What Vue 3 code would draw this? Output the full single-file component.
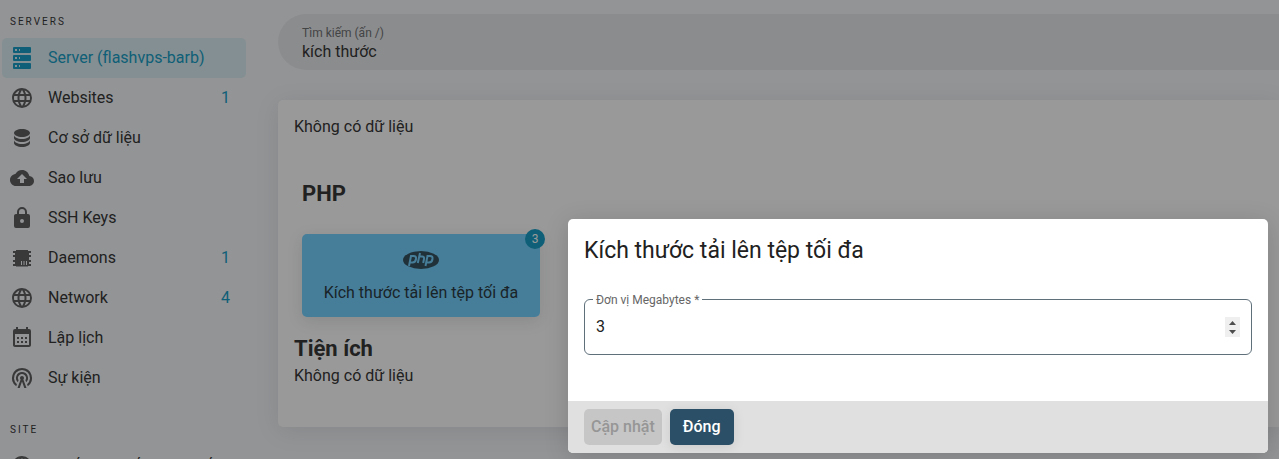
<script setup>
import { ref } from 'vue'

const globe = 'M16.36,14C16.44,13.34 16.5,12.68 16.5,12C16.5,11.32 16.44,10.66 16.36,10H19.74C19.9,10.64 20,11.31 20,12C20,12.69 19.9,13.36 19.74,14M14.59,19.56C15.19,18.45 15.65,17.25 15.97,16H18.92C17.96,17.65 16.43,18.93 14.59,19.56M14.34,14H9.66C9.56,13.34 9.5,12.68 9.5,12C9.5,11.32 9.56,10.65 9.66,10H14.34C14.43,10.65 14.5,11.32 14.5,12C14.5,12.68 14.43,13.34 14.34,14M12,19.96C11.17,18.76 10.5,17.43 10.09,16H13.91C13.5,17.43 12.83,18.76 12,19.96M8,8H5.08C6.03,6.34 7.57,5.06 9.4,4.44C8.8,5.55 8.35,6.75 8,8M5.08,16H8C8.35,17.25 8.8,18.45 9.4,19.56C7.57,18.93 6.03,17.65 5.08,16M4.26,14C4.1,13.36 4,12.69 4,12C4,11.31 4.1,10.64 4.26,10H7.64C7.56,10.66 7.5,11.32 7.5,12C7.5,12.68 7.56,13.34 7.64,14M12,4.03C12.83,5.23 13.5,6.57 13.91,8H10.09C10.5,6.57 11.17,5.23 12,4.03M18.92,8H15.97C15.65,6.75 15.19,5.55 14.59,4.44C16.43,5.07 17.96,6.34 18.92,8M12,2C6.47,2 2,6.5 2,12A10,10 0 0,0 12,22A10,10 0 0,0 22,12A10,10 0 0,0 12,2Z'

const servers = [
  { label: 'Server (flashvps-barb)', active: true, icon: 'M4,1H20A1,1 0 0,1 21,2V6A1,1 0 0,1 20,7H4A1,1 0 0,1 3,6V2A1,1 0 0,1 4,1M4,9H20A1,1 0 0,1 21,10V14A1,1 0 0,1 20,15H4A1,1 0 0,1 3,14V10A1,1 0 0,1 4,9M4,17H20A1,1 0 0,1 21,18V22A1,1 0 0,1 20,23H4A1,1 0 0,1 3,22V18A1,1 0 0,1 4,17M9,5H10V3H9V5M9,13H10V11H9V13M9,21H10V19H9V21M5,3V5H7V3H5M5,11V13H7V11H5M5,19V21H7V19H5Z' },
  { label: 'Websites', count: 1, icon: globe },
  { label: 'Cơ sở dữ liệu', icon: 'M12,3C7.58,3 4,4.79 4,7C4,9.21 7.58,11 12,11C16.42,11 20,9.21 20,7C20,4.79 16.42,3 12,3M4,9V12C4,14.21 7.58,16 12,16C16.42,16 20,14.21 20,12V9C20,11.21 16.42,13 12,13C7.58,13 4,11.21 4,9M4,14V17C4,19.21 7.58,21 12,21C16.42,21 20,19.21 20,17V14C20,16.21 16.42,18 12,18C7.58,18 4,16.21 4,14Z' },
  { label: 'Sao lưu', icon: 'M19.35 10.04C18.67 6.59 15.64 4 12 4 9.11 4 6.6 5.64 5.35 8.04 2.34 8.36 0 10.91 0 14c0 3.31 2.69 6 6 6h13c2.76 0 5-2.24 5-5 0-2.64-2.05-4.78-4.65-4.96zM14 13v4h-4v-4H7l5-5 5 5h-3z' },
  { label: 'SSH Keys', icon: 'M12,17A2,2 0 0,0 14,15C14,13.89 13.1,13 12,13A2,2 0 0,0 10,15A2,2 0 0,0 12,17M18,8A2,2 0 0,1 20,10V20A2,2 0 0,1 18,22H6A2,2 0 0,1 4,20V10C4,8.89 4.9,8 6,8H7V6A5,5 0 0,1 12,1A5,5 0 0,1 17,6V8H18M12,3A3,3 0 0,0 9,6V8H15V6A3,3 0 0,0 12,3Z' },
  { label: 'Daemons', count: 1, icon: 'M6 4H18V5H21V7H19V9H21V11H19V14H21V16H19V18H21V20H18V20.500H6V20H3V18H5V16H3V14H5V11H3V9H5V7H3V5H6ZM11 15V19H12V15ZM13.500 15V19H14.500V15ZM16 15V19H17V15Z' },
  { label: 'Network', count: 4, icon: globe },
  { label: 'Lập lịch', icon: 'M7,11H9V13H7V11M21,5V19C21,20.110 20.110,21 19,21H5C3.890,21 3,20.100 3,19V5A2,2 0 0,1 5,3H6V1H8V3H16V1H18V3H19A2,2 0 0,1 21,5M5,8V19H19V8H5M15,13V11H17V13H15M11,13V11H13V13H11M7,17V15H9V17H7M15,17V15H17V17H15M11,17V15H13V17H11Z' },
  { label: 'Sự kiện', icon: 'M12 10C10.900 10 10 10.900 10 12C10 12.600 10.230 13.100 10.620 13.500L7.500 22H9.700L12 15.500L14.300 22H16.500L13.380 13.500C13.770 13.100 14 12.600 14 12C14 10.900 13.100 10 12 10M12 6A6 6 0 0 0 7.800 16.300L8.600 14.200A4 4 0 1 1 15.400 14.200L16.200 16.300A6 6 0 0 0 12 6M12 2A10 10 0 0 0 6.200 20.150L6.950 18.200A8 8 0 1 1 17.050 18.200L17.800 20.150A10 10 0 0 0 12 2Z' }
]

const sites = [{ label: 'Thiết lập chế độ liên kết', icon: globe }]

const search = ref('kích thước')
const size = ref(3)
</script>

<template>
  <div class="page">
    <div class="shell">
      <nav class="sidebar">
        <h2 class="overline">SERVERS</h2>
        <a v-for="item in servers" :key="item.label" href="#" class="item" :class="{ active: item.active }">
          <svg viewBox="0 0 24 24" aria-hidden="true"><path :d="item.icon" fill-rule="evenodd" /></svg>
          <span class="name">{{ item.label }}</span>
          <span v-if="item.count" class="count">{{ item.count }}</span>
        </a>
        <h2 class="overline second">SITE</h2>
        <a v-for="item in sites" :key="item.label" href="#" class="item">
          <svg viewBox="0 0 24 24" aria-hidden="true"><path :d="item.icon" /></svg>
          <span class="name">{{ item.label }}</span>
        </a>
      </nav>

      <main class="content">
        <div class="search">
          <label for="search">Tìm kiếm (ấn /)</label>
          <input id="search" v-model="search" type="text">
        </div>
        <section class="card">
          <p class="empty">Không có dữ liệu</p>
          <div class="group">
            <h3>PHP</h3>
            <button type="button" class="tile">
              <svg class="php" viewBox="0 0 36 20" aria-hidden="true">
                <ellipse cx="18" cy="10" rx="18" ry="9" />
                <g fill="none" stroke-width="2">
                  <path d="M6 16 L8 6 H10.500 Q13.500 6 13 9 Q12.500 12.500 9.500 12.500 H7" />
                  <path d="M17 3 L14.800 13 M16.300 6.500 H19 Q21.500 6.500 21 9 L20.200 13" />
                  <path d="M22.500 16 L24.500 6 H27 Q30 6 29.500 9 Q29 12.500 26 12.500 H23.500" />
                </g>
              </svg>
              <span>Kích thước tải lên tệp tối đa</span>
              <span class="badge">3</span>
            </button>
          </div>
          <h3>Tiện ích</h3>
          <p class="empty">Không có dữ liệu</p>
        </section>
      </main>
    </div>

    <div class="overlay">
      <form class="dialog" role="dialog" aria-labelledby="dialog-title" @submit.prevent>
        <div class="body">
          <h1 id="dialog-title">Kích thước tải lên tệp tối đa</h1>
          <div class="field">
            <label for="size">Đơn vị Megabytes *</label>
            <input id="size" v-model="size" type="number" required>
            <div class="stepper">
              <button type="button" aria-label="+" @click="size++">
                <svg viewBox="0 0 15 10" aria-hidden="true"><path d="M4 8 L7.500 4 L11 8Z" /></svg>
              </button>
              <button type="button" aria-label="-" @click="size--">
                <svg viewBox="0 0 15 10" aria-hidden="true"><path d="M4 3 L7.500 7 L11 3Z" /></svg>
              </button>
            </div>
          </div>
        </div>
        <footer>
          <button type="submit" disabled>Cập nhật</button>
          <button type="button" class="close">Đóng</button>
        </footer>
      </form>
    </div>
  </div>
</template>

<style>
body { margin: 0; }
</style>

<style scoped>
* { box-sizing: border-box; }
h1, h2, h3, p { margin: 0; }
.page {
  position: relative;
  height: 100vh;
  overflow: hidden;
  background: #f5f7fa;
  color: #373737;
  font: 16px/24px Roboto, "Noto Sans", sans-serif;
}
.shell { display: flex; }
.sidebar { flex: none; width: 246px; padding: 8px 0 0 2px; }
.overline {
  padding: 1px 0 0 8px;
  margin-bottom: 3px;
  font-size: 10px;
  font-weight: 400;
  line-height: 26px;
  letter-spacing: 2px;
}
.second { margin-top: 18px; }
.item {
  display: flex;
  align-items: center;
  height: 40px;
  padding: 0 16px 0 8px;
  border-radius: 5px;
  color: #373737;
  text-decoration: none;
}
.item svg { flex: none; width: 24px; height: 24px; margin-right: 14px; fill: #5f5f61; }
.name { flex: 1; white-space: nowrap; }
.count { color: #189fc7; }
.active { background: #dbeff4; color: #189fc7; }
.active svg { fill: #189fc7; }
.content { flex: 1; min-width: 0; padding: 14px 0 0 32px; }
.search {
  display: flex;
  flex-direction: column;
  height: 56px;
  padding: 11px 24px 0;
  border-radius: 28px 0 0 28px;
  background: #e8eaec;
}
.search label { font-size: 12px; line-height: 16px; color: #707274; }
.search input {
  width: 100%;
  height: 22px;
  padding: 0;
  border: 0;
  outline: 0;
  background: none;
  color: #373737;
  font: inherit;
}
.card {
  margin-top: 30px;
  padding: 15px 16px 39px;
  border-radius: 5px 0 0 5px;
  background: #fff;
  box-shadow: 0 4px 24px rgba(34, 41, 47, 0.1);
}
.group { padding: 40px 8px 17px; }
h3 { font-size: 22px; line-height: 30px; font-weight: 700; }
.empty { line-height: 24px; }
.tile {
  position: relative;
  display: flex;
  flex-direction: column;
  align-items: center;
  gap: 11px;
  width: 238px;
  height: 83px;
  margin-top: 25px;
  padding: 16px 0 0;
  border: 0;
  border-radius: 5px;
  background: #75d1ff;
  box-shadow: 0 4px 16px rgba(34, 41, 47, 0.12);
  color: #2c3c44;
  font: inherit;
}
.php { flex: none; width: 36px; height: 20px; fill: #36535f; stroke: #75d1ff; }
.php ellipse { stroke: none; }
.badge {
  position: absolute;
  top: -5px;
  right: -5px;
  width: 20px;
  height: 20px;
  border-radius: 10px;
  background: #189fc7;
  color: #fff;
  font-size: 12px;
  line-height: 20px;
}
.overlay {
  position: absolute;
  inset: 0;
  display: flex;
  align-items: flex-end;
  justify-content: flex-end;
  padding: 0 11px 6px;
  background: rgba(0, 0, 0, 0.4);
}
.dialog {
  width: 100%;
  max-width: 700px;
  overflow: hidden;
  border-radius: 5px;
  background: #fff;
  box-shadow: 0 4px 24px rgba(0, 0, 0, 0.15);
}
.body { padding: 16px 16px 46px; }
h1 { font-size: 23px; line-height: 32px; font-weight: 400; color: #212121; }
.field { position: relative; margin-top: 32px; }
.field label {
  position: absolute;
  top: -7px;
  left: 9px;
  padding: 0 3px;
  background: #fff;
  font-size: 12px;
  line-height: 16px;
  color: #666;
}
.field input {
  display: block;
  width: 100%;
  height: 56px;
  padding: 0 40px 2px 11px;
  border: 1px solid #60707a;
  border-radius: 6px;
  outline: 0;
  background: #fff;
  color: #212121;
  font: inherit;
  appearance: textfield;
}
.stepper {
  position: absolute;
  top: 18px;
  right: 12px;
  width: 15px;
  background: #efefef;
}
.stepper button {
  display: block;
  width: 15px;
  height: 10px;
  padding: 0;
  border: 0;
  background: none;
}
.stepper svg { display: block; fill: #4d4d4d; }
footer { display: flex; gap: 8px; padding: 8px 16px; background: #e0e0e0; }
footer button {
  height: 36px;
  padding: 0 7px;
  border: 0;
  border-radius: 5px;
  background: #c6c6c6;
  color: #969696;
  font: inherit;
  font-weight: 500;
}
footer .close {
  padding: 0 13px;
  background: #2b4f66;
  color: #fff;
  box-shadow: 0 2px 12px rgba(0, 0, 0, 0.1);
}
</style>
